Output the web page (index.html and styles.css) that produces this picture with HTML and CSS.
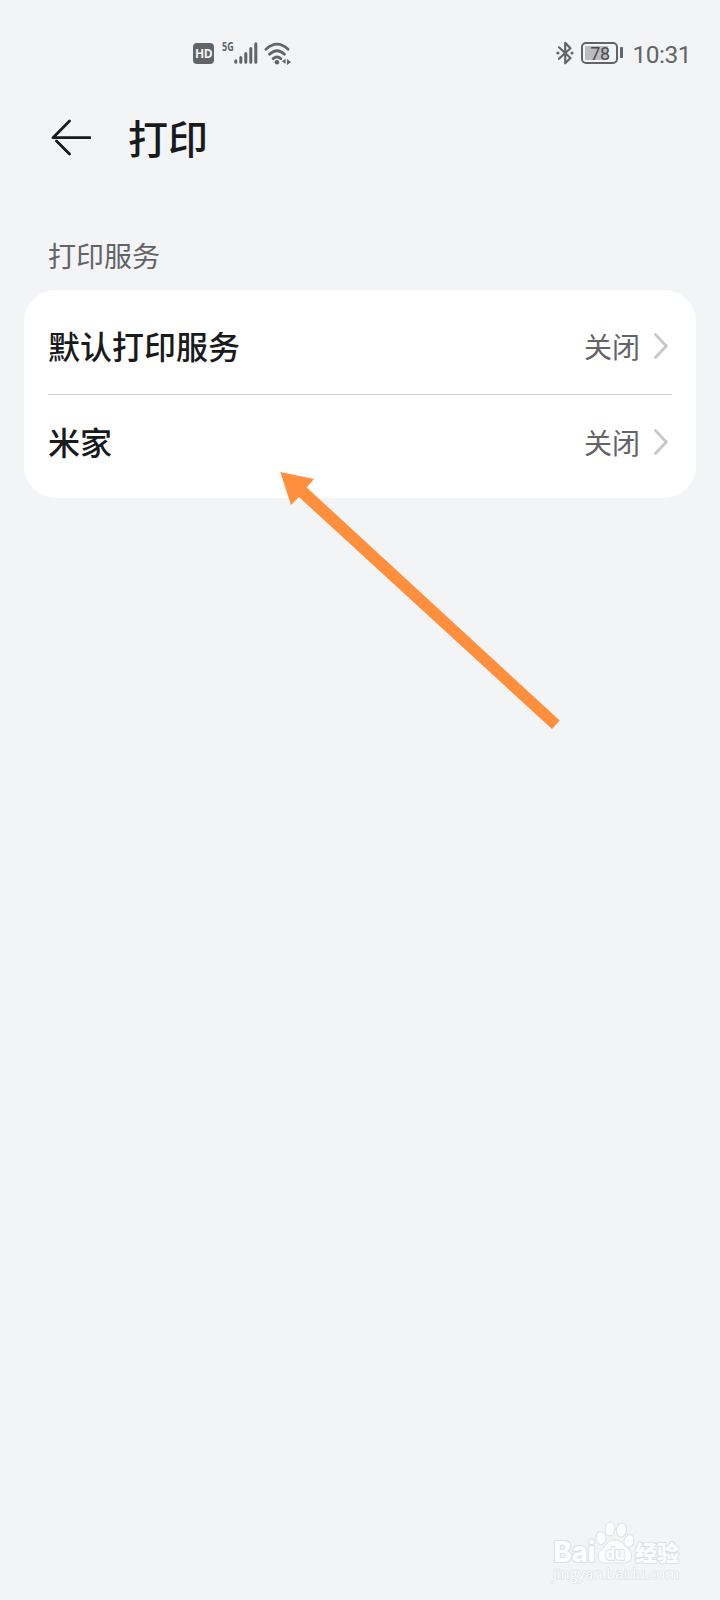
FILE: index.html
```
<!DOCTYPE html>
<html lang="zh-CN">
<head>
    <meta charset="UTF-8">
    <meta name="viewport" content="width=device-width, initial-scale=1.0">
    <title>打印</title>
    <link rel="stylesheet" href="styles.css">
</head>
<body>

<div id="app">
    <div class="status-bar">
        <div class="status-left">
            <span class="hd">HD</span>
            <span class="network">5G</span>
            <svg class="signal" width="24" height="22" viewBox="0 0 24 22">
                <path d="M1.8 18.8v1.4M6.8 15.5v4.7M11.8 11.5v8.7M16.8 6.5v13.7M21.8 1.8v18.4"/>
            </svg>
            <svg class="wifi" width="28" height="24" viewBox="0 0 28 24">
                <path d="M2 7.2Q13 -3 24 7.2M5.6 12.2Q13 5.4 20.4 12.2M9.2 16.6Q13 13.4 16.8 16.6"/>
                <circle cx="13" cy="20.3" r="2.3"/>
                <path class="wifi-data" d="M18 19.3l3.6-2.6v5.2zM23 17v6l4-3z"/>
            </svg>
        </div>
        <div class="status-right">
            <svg class="bluetooth" width="18" height="24" viewBox="0 0 18 24">
                <path d="M3 6.3L14.5 17L9.2 22.3V1.9L14.5 7.2L3 17.7"/>
                <circle cx="1.9" cy="12" r="1.6"/>
                <circle cx="16" cy="12" r="1.6"/>
            </svg>
            <div class="battery"><span>78</span></div>
            <div class="battery-tip"></div>
            <span class="clock">10:31</span>
        </div>
    </div>

    <div class="header">
        <svg class="back" width="40" height="37" viewBox="0 0 40 37">
            <path d="M18.5 2L2 18.7H39M5.5 22L18.5 35"/>
        </svg>
        <h1>打印</h1>
    </div>

    <h2 class="section-title">打印服务</h2>

    <div class="card">
        <div class="row">
            <span class="name">默认打印服务</span>
            <span class="state">关闭</span>
            <svg class="chevron" width="14" height="26" viewBox="0 0 14 26">
                <path d="M1.5 1.5L12.3 13L1.5 24.5"/>
            </svg>
        </div>
        <div class="row">
            <span class="name">米家</span>
            <span class="state">关闭</span>
            <svg class="chevron" width="14" height="26" viewBox="0 0 14 26">
                <path d="M1.5 1.5L12.3 13L1.5 24.5"/>
            </svg>
        </div>
    </div>

    <svg class="pointer" width="282" height="260" viewBox="0 0 282 260">
        <path d="M0.3 0L34 7L26.7 15.5L279.7 248.5L272 257L19 25L11 33Z"/>
    </svg>

    <svg class="watermark" width="134" height="68" viewBox="0 0 134 68">
        <text class="brand" x="2.5" y="41.5" textLength="42" lengthAdjust="spacingAndGlyphs">Bai</text>
        <ellipse cx="50" cy="18" rx="5" ry="6.5" transform="rotate(-8 50 18)"/>
        <ellipse cx="59" cy="9" rx="5" ry="7"/>
        <ellipse cx="70.5" cy="10" rx="5" ry="7" transform="rotate(8 70.5 10)"/>
        <ellipse cx="78" cy="21" rx="5" ry="6.5" transform="rotate(15 78 21)"/>
        <path d="M64 20C56 20 55 26 50 30C45 34 46 43 54 43H73C81 43 83 34 78 30C73 26 72 20 64 20Z"/>
        <text class="du" x="54.5" y="40" textLength="19" lengthAdjust="spacingAndGlyphs">du</text>
        <text class="brand-cn" x="84" y="40.5">经验</text>
        <text class="site" x="2" y="58.5" textLength="126" lengthAdjust="spacingAndGlyphs">jingyan.baidu.com</text>
    </svg>
</div>

</body>
</html>
```
FILE: styles.css
```
body {
    font-family: "Noto Sans CJK SC", sans-serif;
    margin: 0;
    background-color: #f2f4f6;
    color: #191a1c;
}

#app {
    position: relative;
    height: 1600px;
    overflow: hidden;
}

svg {
    display: block;
    flex: none;
    fill: none;
    stroke-linecap: round;
    stroke-linejoin: round;
}

/* status bar */
.status-bar {
    display: flex;
    justify-content: space-between;
    height: 66px;
    padding: 41px 29px 0 193px;
    box-sizing: border-box;
    font-family: Roboto, sans-serif;
    color: #636467;
}

.status-left,
.status-right {
    display: flex;
    align-items: flex-start;
}

.hd {
    width: 21px;
    height: 21px;
    margin-top: 2px;
    border-radius: 4px;
    background-color: #636467;
    color: #f2f4f6;
    font: bold 12px/21px "Open Sans", sans-serif;
    letter-spacing: -0.5px;
    text-align: center;
}

.network {
    width: 12px;
    margin-left: 8px;
    font: bold 12px/12px "Open Sans", sans-serif;
    transform: scaleX(0.75);
    transform-origin: left;
}

.signal {
    margin-top: 1px;
    stroke: #636467;
    stroke-width: 3;
}

.wifi {
    margin: 1px 0 0 6px;
    stroke: #636467;
    stroke-width: 2.8;
}

.wifi circle,
.wifi .wifi-data,
.bluetooth circle {
    fill: #636467;
    stroke: none;
}

.bluetooth {
    stroke: #636467;
    stroke-width: 2.2;
}

.battery {
    width: 37px;
    height: 22px;
    margin: 1px 0 0 7px;
    padding: 2px;
    box-sizing: border-box;
    border: 2px solid #636467;
    border-radius: 5px;
    background: linear-gradient(to right, #bbbcbe 78%, transparent 78%) content-box;
    font-size: 18px;
    line-height: 15px;
    letter-spacing: -0.5px;
    text-align: center;
    color: #4c4d50;
}

.battery-tip {
    width: 3px;
    height: 11px;
    margin: 6px 0 0 2px;
    border-radius: 1px;
    background-color: #636467;
}

.clock {
    margin-left: 9px;
    font-size: 24.5px;
    line-height: 28px;
    letter-spacing: -0.5px;
}

/* page title */
.header {
    display: flex;
    align-items: flex-start;
    height: 169px;
    padding: 53px 0 0 51px;
    box-sizing: border-box;
}

.back {
    stroke: #191a1c;
    stroke-width: 2.8;
}

.header h1 {
    margin: -11px 0 0 37px;
    font-size: 40px;
    font-weight: 500;
    line-height: 58px;
}

.section-title {
    margin: 0;
    padding: 0 48px;
    height: 55px;
    font-size: 28px;
    font-weight: 400;
    line-height: 40px;
    color: #636467;
}

/* settings list */
.card {
    margin: 0 24px;
    padding: 8px 24px;
    border-radius: 32px;
    background-color: #fff;
}

.row {
    display: flex;
    align-items: center;
    height: 96px;
    box-sizing: border-box;
}

.row + .row {
    padding-bottom: 2px;
    border-top: 1px solid #d3d3d4;
}

.name {
    flex: 1;
    padding-bottom: 2px;
    font-size: 32px;
    font-weight: 500;
    line-height: 46px;
}

.state {
    font-size: 28px;
    line-height: 40px;
    color: #636467;
}

.chevron {
    margin: 0 4px 0 14px;
    stroke: #c8c8ca;
    stroke-width: 2.8;
}

/* arrow laid over the list */
.pointer {
    position: absolute;
    left: 280px;
    top: 472px;
    fill: #ff8f3c;
}

.watermark {
    position: absolute;
    left: 551px;
    top: 1520px;
    fill: #fcfdfd;
    stroke: #dfe0e2;
    stroke-width: 1;
}

.watermark text {
    font-family: Inter, "Noto Sans CJK SC", sans-serif;
    font-weight: 800;
    paint-order: stroke;
    stroke-width: 2;
}

.watermark .brand {
    font-size: 28px;
}

.watermark .du {
    font-size: 18px;
}

.watermark .brand-cn {
    font-family: "Noto Sans CJK SC", sans-serif;
    font-size: 22px;
    font-weight: 900;
}

.watermark .site {
    font-family: "Open Sans", sans-serif;
    font-size: 15px;
    font-weight: 400;
    stroke-width: 1.2;
}
```
